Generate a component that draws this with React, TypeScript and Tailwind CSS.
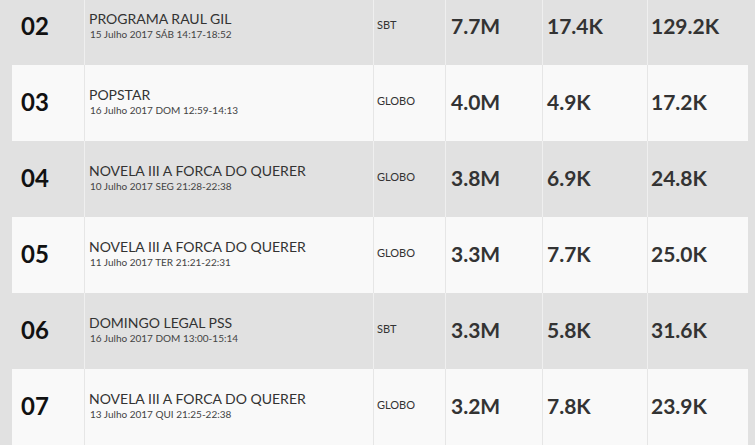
import React from "react";

type Row = {
  rank: string;
  title: string;
  sub: string;
  ch: string;
  a: string;
  b: string;
  c: string;
};

const rows: Row[] = [
  { rank: "02", title: "PROGRAMA RAUL GIL", sub: "15 Julho 2017 SÁB 14:17-18:52", ch: "SBT", a: "7.7M", b: "17.4K", c: "129.2K" },
  { rank: "03", title: "POPSTAR", sub: "16 Julho 2017 DOM 12:59-14:13", ch: "GLOBO", a: "4.0M", b: "4.9K", c: "17.2K" },
  { rank: "04", title: "NOVELA III A FORCA DO QUERER", sub: "10 Julho 2017 SEG 21:28-22:38", ch: "GLOBO", a: "3.8M", b: "6.9K", c: "24.8K" },
  { rank: "05", title: "NOVELA III A FORCA DO QUERER", sub: "11 Julho 2017 TER 21:21-22:31", ch: "GLOBO", a: "3.3M", b: "7.7K", c: "25.0K" },
  { rank: "06", title: "DOMINGO LEGAL PSS", sub: "16 Julho 2017 DOM 13:00-15:14", ch: "SBT", a: "3.3M", b: "5.8K", c: "31.6K" },
  { rank: "07", title: "NOVELA III A FORCA DO QUERER", sub: "13 Julho 2017 QUI 21:25-22:38", ch: "GLOBO", a: "3.2M", b: "7.8K", c: "23.9K" },
];

export default function App() {
  return (
    <div
      className="w-[755px] h-[445px] overflow-hidden bg-[#e1e1e1]"
      style={{ fontFamily: "Lato, 'Noto Sans', sans-serif" }}
    >
      <div className="-mt-[11px] flex flex-col">
        {rows.map((r, i) => {
          const gray = i % 2 === 0;
          const bg = gray ? "bg-[#e1e1e1]" : "bg-[#f9f9f9]";
          const bd = gray ? "border-[#efefef]" : "border-[#e6e6e6]";
          return (
            <div key={r.rank} className={`ml-[12px] w-[736px] h-[76px] flex ${bg}`}>
              <div className="w-[72px] flex items-center pb-[3px] pl-[9px]">
                <span className="text-[24px] font-bold text-[#111] leading-none">{r.rank}</span>
              </div>
              <div className={`w-[289px] flex flex-col justify-center pb-[3px] pl-[4px] border-l ${bd}`}>
                <div className="text-[14px] leading-[17px] text-[#333]">{r.title}</div>
                <div className="text-[10px] leading-[13px] text-[#444] mt-[1px] pl-[1px]">{r.sub}</div>
              </div>
              <div className={`w-[72px] flex items-center pb-[3px] pl-[3px] border-l ${bd}`}>
                <span className="text-[11px] text-[#333]">{r.ch}</span>
              </div>
              <div className={`w-[97px] flex items-center pb-[3px] pl-[5px] border-l ${bd}`}>
                <span className="text-[21px] font-bold text-[#333] leading-none">{r.a}</span>
              </div>
              <div className={`w-[105px] flex items-center pb-[3px] pl-[4px] border-l ${bd}`}>
                <span className="text-[21px] font-bold text-[#333] leading-none">{r.b}</span>
              </div>
              <div className={`w-[101px] flex items-center pb-[3px] pl-[3px] border-l ${bd}`}>
                <span className="text-[21px] font-bold text-[#333] leading-none">{r.c}</span>
              </div>
            </div>
          );
        })}
      </div>
    </div>
  );
}
